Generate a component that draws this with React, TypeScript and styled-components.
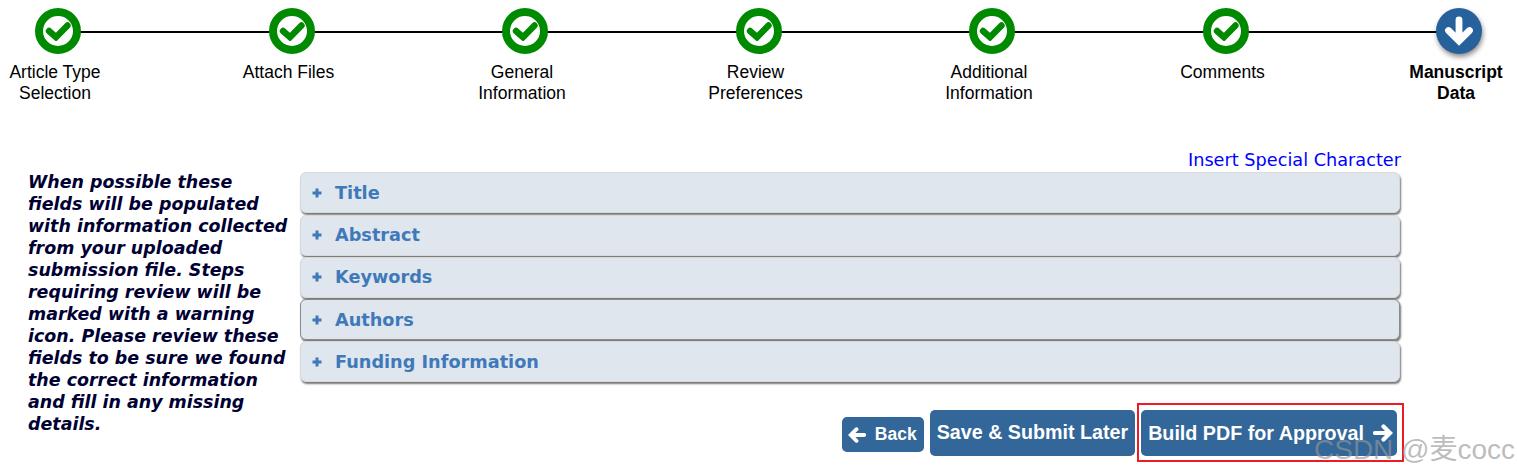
import React from 'react';
import styled, { createGlobalStyle } from 'styled-components';

const steps = [
  { id: 'type', label: ['Article Type', 'Selection'] },
  { id: 'files', label: ['Attach Files'] },
  { id: 'general', label: ['General', 'Information'] },
  { id: 'review', label: ['Review', 'Preferences'] },
  { id: 'additional', label: ['Additional', 'Information'] },
  { id: 'comments', label: ['Comments'] },
  { id: 'data', label: ['Manuscript', 'Data'], current: true },
];

const sections = ['Title', 'Abstract', 'Keywords', 'Authors', 'Funding Information'];

const helpText =
  'When possible these fields will be populated with information collected from your uploaded submission file. Steps requiring review will be marked with a warning icon. Please review these fields to be sure we found the correct information and fill in any missing details.';

const CheckIcon = () => (
  <svg width="26" height="20" viewBox="0 0 26 20" aria-hidden="true">
    <path
      d="M4 10l7 6.200L22.500 4.500"
      fill="none"
      stroke="#008a00"
      strokeWidth="6.400"
      strokeLinecap="round"
      strokeLinejoin="miter"
    />
  </svg>
);

const DownIcon = () => (
  <svg width="32" height="32" viewBox="0 0 32 32" aria-hidden="true">
    <path
      d="M16 5v20M5.500 15.500L16 26l10.500-10.500"
      fill="none"
      stroke="#fff"
      strokeWidth="6.800"
      strokeLinecap="round"
    />
  </svg>
);

const PlusIcon = () => (
  <PlusSvg viewBox="0 0 10 10" aria-hidden="true">
    <path d="M5 .5v9M.5 5h9" fill="none" stroke="#3f79b9" strokeWidth="3" />
  </PlusSvg>
);

const ArrowIcon = ({ left }: { left?: boolean }) => (
  <ArrowSvg viewBox="0 0 20 20" $left={left} aria-hidden="true">
    <path d="M2 10h14M10.500 3.500L17 10l-6.500 6.500" fill="none" stroke="#fff" strokeWidth="4.200" strokeLinecap="round" />
  </ArrowSvg>
);

const App = () => {
  return (
    <Page>
      <GlobalStyle />
      <StepTrack>
        <StepLine />
        {steps.map((step) => (
          <Step key={step.id}>
            <StepCircle $current={step.current}>{step.current ? <DownIcon /> : <CheckIcon />}</StepCircle>
            <StepLabel $current={step.current}>
              {step.label.map((line) => (
                <div key={line}>{line}</div>
              ))}
            </StepLabel>
          </Step>
        ))}
      </StepTrack>
      <Content>
        <HelpText>{helpText}</HelpText>
        <Main>
          <SpecialChar href="#">Insert Special Character</SpecialChar>
          <Accordion>
            {sections.map((name) => (
              <Section key={name} $active={name === 'Authors'}>
                <PlusIcon />
                {name}
              </Section>
            ))}
          </Accordion>
          <Actions>
            <BackButton>
              <ArrowIcon left />
              Back
            </BackButton>
            <ActionButton>Save &amp; Submit Later</ActionButton>
            <Highlight>
              <NextButton>
                Build PDF for Approval
                <ArrowIcon />
              </NextButton>
            </Highlight>
          </Actions>
        </Main>
      </Content>
      <Watermark>CSDN @麦cocc</Watermark>
    </Page>
  );
};

const GlobalStyle = createGlobalStyle`
  html, body {
    margin: 0;
    padding: 0;
    background: #fff;
    overflow: hidden;
  }
`;

const Page = styled.div`
  position: relative;
  width: 1517px;
  height: 476px;
  overflow: hidden;
`;

const StepTrack = styled.div`
  position: relative;
  display: flex;
  justify-content: space-between;
  width: 1511px;
  padding-top: 8px;
`;

const StepLine = styled.div`
  position: absolute;
  left: 58px;
  right: 51px;
  top: 31px;
  height: 2px;
  background: #000;
`;

const Step = styled.div`
  position: relative;
  width: 110px;
  display: flex;
  flex-direction: column;
  align-items: center;
`;

const StepCircle = styled.div<{ $current?: boolean }>`
  width: 46px;
  height: 46px;
  margin-left: 6px;
  box-sizing: border-box;
  border-radius: 50%;
  display: flex;
  align-items: center;
  justify-content: center;
  background: ${(p) => (p.$current ? '#26619c' : '#fff')};
  border: ${(p) => (p.$current ? 'none' : '8px solid #008a00')};
  box-shadow: ${(p) => (p.$current ? '1px 3px 5px rgba(0, 0, 0, 0.45)' : 'none')};
`;

const StepLabel = styled.div<{ $current?: boolean }>`
  margin-top: 8px;
  font-family: 'Liberation Sans', Arial, sans-serif;
  font-size: 17.5px;
  line-height: 21px;
  text-align: center;
  white-space: nowrap;
  color: #000;
  font-weight: ${(p) => (p.$current ? 700 : 400)};
`;

const Content = styled.div`
  display: flex;
  align-items: flex-start;
  margin-top: 46px;
  padding-left: 28px;
`;

const HelpText = styled.div`
  width: 264px;
  margin-top: 21px;
  margin-right: 8px;
  flex-shrink: 0;
  font-family: 'DejaVu Sans', Verdana, sans-serif;
  font-size: 17.45px;
  line-height: 22px;
  font-weight: 700;
  font-style: italic;
  color: #000033;
`;

const Main = styled.div`
  width: 1100px;
  display: flex;
  flex-direction: column;
`;

const SpecialChar = styled.a`
  align-self: flex-end;
  margin-right: -1px;
  font-family: 'DejaVu Sans', Verdana, sans-serif;
  font-size: 17.7px;
  line-height: 20px;
  color: #0000ff;
  text-decoration: none;
`;

const Accordion = styled.div`
  margin-top: 2.45px;
  display: flex;
  flex-direction: column;
  gap: 1.25px;
`;

const Section = styled.div<{ $active?: boolean }>`
  height: 41px;
  box-sizing: border-box;
  display: flex;
  align-items: center;
  padding-left: 11px;
  border-radius: 6px;
  background: #dfe6ee;
  border: 1px solid ${(p) => (p.$active ? '#8a8a8a' : '#d8d8d8')};
  box-shadow: 1px 2px 2px #777;
  font-family: 'DejaVu Sans', Verdana, sans-serif;
  font-size: 17.7px;
  font-weight: 700;
  color: #3f79b9;
`;

const PlusSvg = styled.svg`
  width: 10px;
  height: 10px;
  margin-right: 13px;
`;

const ArrowSvg = styled.svg<{ $left?: boolean }>`
  width: ${(p) => (p.$left ? '18px' : '20px')};
  height: ${(p) => (p.$left ? '18px' : '20px')};
  flex-shrink: 0;
  transform: ${(p) => (p.$left ? 'scaleX(-1)' : 'none')};
`;

const Actions = styled.div`
  display: flex;
  justify-content: flex-end;
  align-items: center;
  margin-top: 21px;
  margin-right: -4px;
`;

const ActionButton = styled.button`
  height: 46px;
  display: flex;
  align-items: center;
  gap: 9px;
  padding: 0 7px;
  border: none;
  border-radius: 5px;
  background: #336699;
  color: #fff;
  font-family: 'Liberation Sans', Arial, sans-serif;
  font-size: 19.7px;
  font-weight: 700;
  white-space: nowrap;
`;

const BackButton = styled(ActionButton)`
  height: 35px;
  margin-top: 4px;
  margin-right: 6px;
  padding: 0 7px 0 6px;
  gap: 9px;
  font-size: 17.5px;
`;

const NextButton = styled(ActionButton)`
  padding-right: 4px;
`;

const Highlight = styled.div`
  margin-left: 2px;
  padding: 5px 5px 4px 2px;
  border: 2px solid #ed1c24;
`;

const Watermark = styled.div`
  position: absolute;
  left: 1314px;
  top: 434px;
  font-family: 'Liberation Sans', 'Noto Sans CJK SC', sans-serif;
  font-size: 28px;
  line-height: 32px;
  white-space: nowrap;
  color: rgba(150, 150, 150, 0.65);
`;

export default App;
